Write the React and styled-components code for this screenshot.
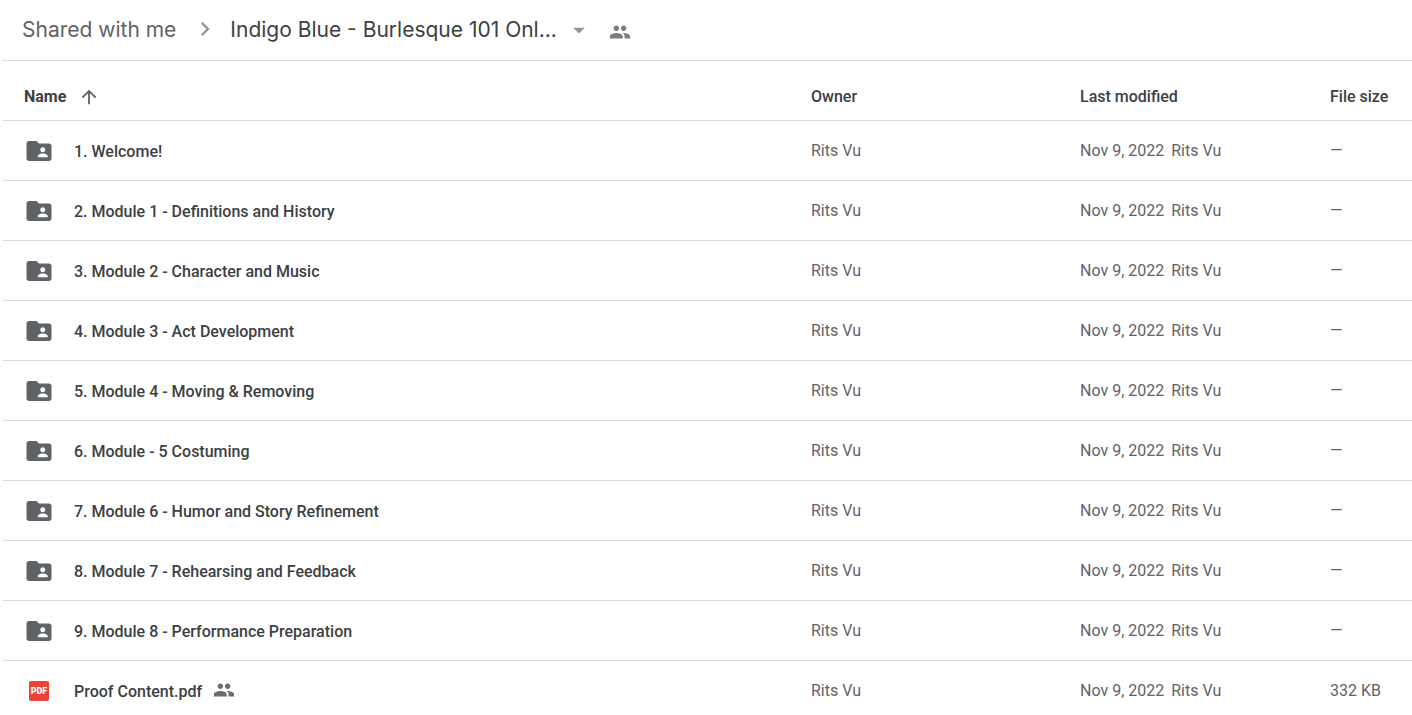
import React from 'react'
import styled, { createGlobalStyle } from 'styled-components'
import { MdArrowDropDown, MdArrowUpward, MdChevronRight, MdFolderShared, MdPeople } from 'react-icons/md'

const files = [
    { name: '1. Welcome!' },
    { name: '2. Module 1 - Definitions and History' },
    { name: '3. Module 2 - Character and Music' },
    { name: '4. Module 3 - Act Development' },
    { name: '5. Module 4 - Moving & Removing' },
    { name: '6. Module - 5 Costuming' },
    { name: '7. Module 6 - Humor and Story Refinement' },
    { name: '8. Module 7 - Rehearsing and Feedback' },
    { name: '9. Module 8 - Performance Preparation' },
    { name: 'Proof Content.pdf', type: 'pdf', shared: true, size: '332 KB' },
]

function PdfIcon() {
    return (
        <svg width="20" height="20" viewBox="0 0 20 20" aria-hidden="true">
            <rect width="20" height="20" rx="2" fill="#ea4335" />
            <text x="10" y="13.2" textAnchor="middle" fontFamily="Roboto, sans-serif" fontSize="9" fontWeight="900" fill="#fff">PDF</text>
        </svg>
    )
}

function FileRow({ file }) {
    return (
        <tr>
            <Cell>
                <FileName>
                    <IconSlot>
                        {file.type === 'pdf' ? <PdfIcon /> : <MdFolderShared size={30} />}
                    </IconSlot>
                    <FileLabel>{file.name}</FileLabel>
                    {file.shared && <SharedIcon />}
                </FileName>
            </Cell>
            <Cell>Rits Vu</Cell>
            <Cell>
                <Modified>
                    <span>Nov 9, 2022</span>
                    <span>Rits Vu</span>
                </Modified>
            </Cell>
            <Cell>{file.size || '—'}</Cell>
        </tr>
    )
}

function App() {
    return (
        <Page>
            <GlobalStyle />
            <Breadcrumbs aria-label="Breadcrumb">
                <CrumbLink href="#shared">Shared with me</CrumbLink>
                <MdChevronRight size={28} color="#94959c" />
                <CrumbButton type="button">
                    Indigo Blue - Burlesque 101 Onl...
                    <DropIcon />
                </CrumbButton>
                <PeopleButton type="button" aria-label="Manage access">
                    <MdPeople size={22} />
                </PeopleButton>
            </Breadcrumbs>
            <FileTable>
                <colgroup>
                    <col />
                    <Column $width={269} />
                    <Column $width={250} />
                    <Column $width={82} />
                </colgroup>
                <thead>
                    <tr>
                        <HeadCell $first>
                            <SortButton type="button">
                                Name
                                <MdArrowUpward size={22} color="#5f6368" />
                            </SortButton>
                        </HeadCell>
                        <HeadCell>Owner</HeadCell>
                        <HeadCell>Last modified</HeadCell>
                        <HeadCell>File size</HeadCell>
                    </tr>
                </thead>
                <tbody>
                    {files.map(file => <FileRow key={file.name} file={file} />)}
                </tbody>
            </FileTable>
        </Page>
    )
}

const GlobalStyle = createGlobalStyle`
    * {
        box-sizing: border-box;
    }

    body {
        margin: 0;
        background: #fff;
        font-family: Roboto, sans-serif;
        font-size: 16px;
        color: #3c4043;
    }

    button {
        padding: 0;
        border: 0;
        background: none;
        font: inherit;
        color: inherit;
        cursor: pointer;
    }
`

const Page = styled.main`
    height: 100vh;
    padding-left: 2px;
    overflow: hidden;
`

const Breadcrumbs = styled.nav`
    display: flex;
    align-items: center;
    height: 61px;
    padding: 0 0 2px 20px;
    border-bottom: 1px solid #dadce0;
    font-family: Inter, sans-serif;
    font-size: 21px;
    white-space: nowrap;
`

const CrumbLink = styled.a`
    margin-right: 15px;
    color: #5f6368;
    text-decoration: none;
`

const CrumbButton = styled.button`
    display: flex;
    align-items: center;
    gap: 8px;
    margin-left: 11px;
`

const DropIcon = styled(MdArrowDropDown)`
    width: 28px;
    height: 30px;
    padding-top: 2px;
    color: #939498;
`

const PeopleButton = styled.button`
    display: flex;
    margin-left: 16px;
    padding-top: 6px;
    color: #7c7d81;
`

const FileTable = styled.table`
    width: 100%;
    table-layout: fixed;
    border-collapse: separate;
    border-spacing: 0;
    padding-left: 1px;
`

const Column = styled.col`
    width: ${({ $width }) => $width}px;
`

const HeadCell = styled.th`
    height: 60px;
    padding: 12px 0 0 ${({ $first }) => ($first ? 21 : 0)}px;
    border-bottom: 1px solid #dadce0;
    font-weight: ${({ $first }) => ($first ? 700 : 500)};
    text-align: left;
    white-space: nowrap;
`

const SortButton = styled.button`
    display: flex;
    align-items: center;
    gap: 12px;
`

const Cell = styled.td`
    height: 60px;
    padding: 0;
    border-bottom: 1px solid #dadce0;
    color: #5f6368;
    white-space: nowrap;
`

const FileName = styled.div`
    display: flex;
    align-items: center;
    padding-left: 21px;
    color: #3c4043;
    font-weight: 500;
`

const FileLabel = styled.span`
    padding-top: 2px;
`

const IconSlot = styled.span`
    display: flex;
    align-items: center;
    justify-content: center;
    width: 30px;
    height: 30px;
    margin-right: 20px;
    color: #5f6368;
`

const SharedIcon = styled(MdPeople)`
    width: 22px;
    height: 24px;
    margin-left: 11px;
    padding-bottom: 2px;
    color: #6c6d71;
`

const Modified = styled.div`
    display: flex;
    gap: 7px;
`

export default App
